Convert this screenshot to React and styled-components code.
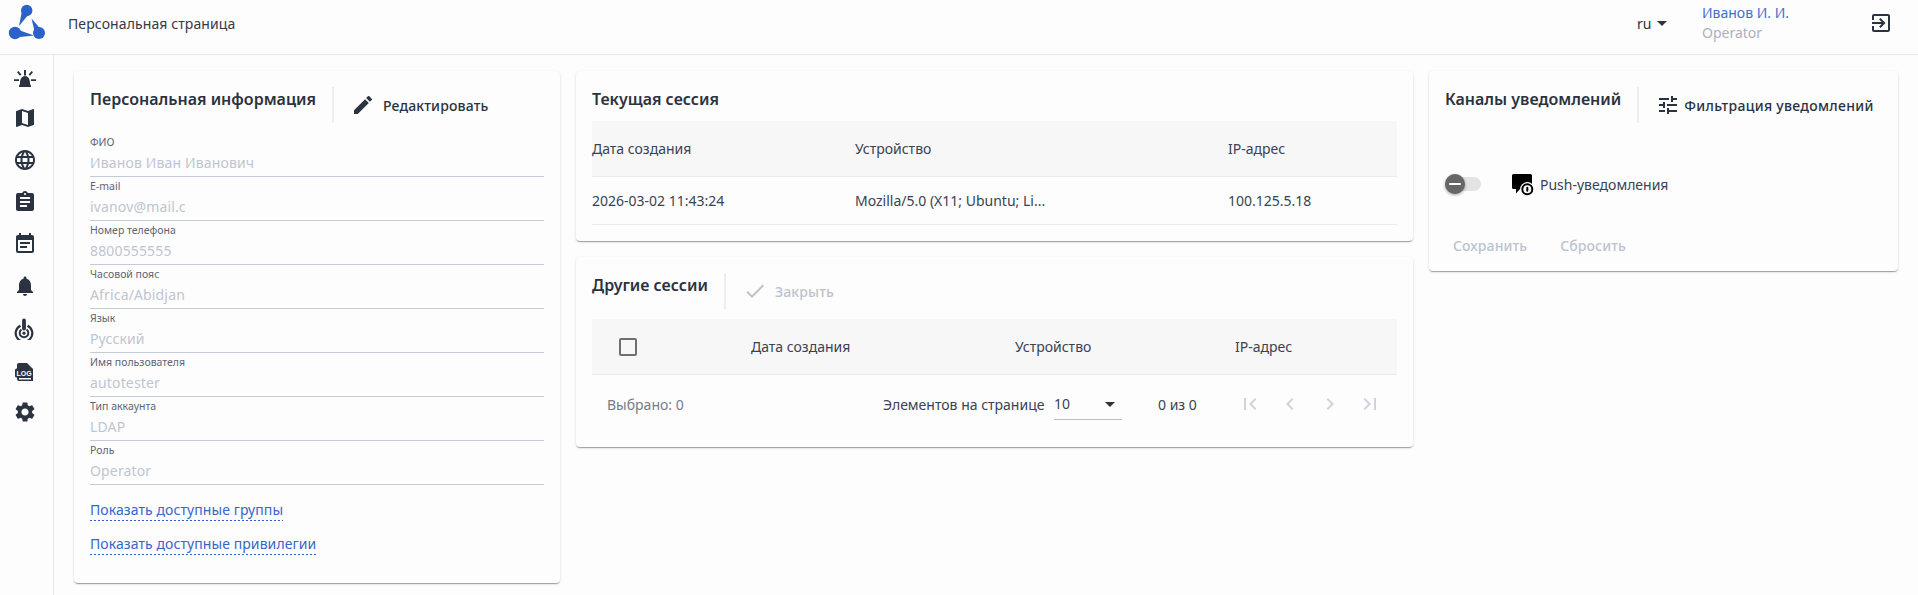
import React from "react";
import styled, { createGlobalStyle } from "styled-components";
import {
  MdMap,
  MdLanguage,
  MdAssignment,
  MdEventNote,
  MdNotifications,
  MdSettings,
  MdEdit,
  MdTune,
  MdCheck,
  MdExitToApp,
  MdFirstPage,
  MdLastPage,
  MdChevronLeft,
  MdChevronRight,
  MdArrowDropDown,
} from "react-icons/md";

const GlobalStyle = createGlobalStyle`
  html, body {
    margin: 0;
    padding: 0;
    background: #fdfdfd;
    font-family: "Noto Sans", "Open Sans", sans-serif;
    color: #2b3240;
  }
  * { box-sizing: border-box; }
`;

const fields = [
  ["ФИО", "Иванов Иван Иванович"],
  ["E-mail", "ivanov@mail.c"],
  ["Номер телефона", "8800555555"],
  ["Часовой пояс", "Africa/Abidjan"],
  ["Язык", "Русский"],
  ["Имя пользователя", "autotester"],
  ["Тип аккаунта", "LDAP"],
  ["Роль", "Operator"],
];

const Logo = () => (
  <svg width="40" height="40" viewBox="0 0 40 40">
    <g fill="#2a62c9">
      <path d="M23.200 9.400 L15.600 5 L12 23 Z" />
      <path d="M7.400 25.500 L8.600 34.500 L27 32.500 Z" />
      <path d="M35.600 28.200 L28.400 31.800 L24.500 15.500 Z" />
      <circle cx="19.700" cy="7.500" r="5.700" />
      <circle cx="8" cy="30" r="6.200" />
      <circle cx="32" cy="30" r="6" />
    </g>
  </svg>
);

const SirenIcon = () => (
  <svg width="24" height="24" viewBox="0 0 24 24" fill="#2b3240">
    <path d="M6 23v-1.500c.4-.4 1-.6 1-2.500 0-4 2-7 5-7s5 3 5 7c0 1.900.6 2.100 1 2.500V23z" />
    <path d="M11 6h2v5.500h-2zM4 8.300l1.400-1.300 3 3.400-1.400 1.300zM20 8.300l-1.400-1.300-3 3.400 1.400 1.300zM1 15.200h5v1.700H1zM18 15.200h5v1.700h-5z" />
  </svg>
);

const TargetIcon = () => (
  <svg width="24" height="24" viewBox="0 0 24 24" fill="none" stroke="#2b3240">
    <path d="M7.500 9.700a8.300 8.300 0 1 0 7 0" strokeWidth="2.200" />
    <path d="M8.500 13.500a4.300 4.300 0 1 0 5 0" strokeWidth="2" />
    <circle cx="11" cy="17.200" r="1.600" fill="#2b3240" stroke="none" />
    <path d="M11 4.500v8" strokeWidth="3.800" strokeLinecap="round" />
  </svg>
);

const LogIcon = () => (
  <svg width="24" height="24" viewBox="0 0 24 24">
    <path d="M6 5h8l6 6v12H6a2 2 0 0 1-2-2V7a2 2 0 0 1 2-2z" fill="#2b3240" />
    <path d="M6 20h12v1.500H6z" fill="#fdfdfd" />
    <rect x="2" y="10.500" width="18" height="9" rx="1.500" fill="#2b3240" />
    <LogText x="11" y="17.500">LOG</LogText>
  </svg>
);

const PushIcon = () => (
  <svg width="24" height="24" viewBox="0 0 24 24">
    <path d="M2.500 2h17A1.500 1.500 0 0 1 21 3.500V17H9l-4 4.500V17H2.500A1.500 1.500 0 0 1 1 15.500v-12A1.500 1.500 0 0 1 2.500 2z" fill="#000" />
    <circle cx="16.300" cy="17.300" r="7.200" fill="#fdfdfd" />
    <circle cx="16.300" cy="17.300" r="5" fill="none" stroke="#000" strokeWidth="2" />
    <rect x="15.300" y="14.800" width="2" height="5" rx="1" fill="#000" />
  </svg>
);

export default function App() {
  return (
    <Page>
      <GlobalStyle />
      <Header>
        <LogoBox><Logo /></LogoBox>
        <PageTitle>Персональная страница</PageTitle>
        <LangSelect>ru<MdArrowDropDown size={24} /></LangSelect>
        <UserBlock>
          <UserName>Иванов И. И.</UserName>
          <UserRole>Operator</UserRole>
        </UserBlock>
        <ExitButton><MdExitToApp size={24} /></ExitButton>
      </Header>
      <Body>
        <Sidebar>
          <SirenIcon />
          <MdMap size={24} />
          <MdLanguage size={24} />
          <MdAssignment size={24} />
          <MdEventNote size={24} />
          <MdNotifications size={24} />
          <TargetIcon />
          <LogIcon />
          <MdSettings size={24} />
        </Sidebar>
        <Content>
          <ProfileCard>
            <CardHead>
              <CardTitle>Персональная информация</CardTitle>
              <Divider />
              <HeadAction>
                <MdEdit size={24} />
                Редактировать
              </HeadAction>
            </CardHead>
            <FieldList>
              {fields.map(([label, value]) => (
                <Field key={label}>
                  <FieldLabel>{label}</FieldLabel>
                  <FieldValue>{value}</FieldValue>
                </Field>
              ))}
            </FieldList>
            <Links>
              <DottedLink>Показать доступные группы</DottedLink>
              <DottedLink>Показать доступные привилегии</DottedLink>
            </Links>
          </ProfileCard>
          <MiddleColumn>
            <SessionCard>
              <CardTitle>Текущая сессия</CardTitle>
              <CurrentHead>
                <span>Дата создания</span>
                <span>Устройство</span>
                <span>IP-адрес</span>
              </CurrentHead>
              <CurrentRow>
                <span>2026-03-02 11:43:24</span>
                <span>Mozilla/5.0 (X11; Ubuntu; Li...</span>
                <span>100.125.5.18</span>
              </CurrentRow>
            </SessionCard>
            <OtherCard>
              <CardHead>
                <CardTitle>Другие сессии</CardTitle>
                <Divider />
                <HeadAction disabled>
                  <MdCheck size={24} />
                  Закрыть
                </HeadAction>
              </CardHead>
              <OtherHead>
                <CheckBox />
                <span>Дата создания</span>
                <span>Устройство</span>
                <span>IP-адрес</span>
              </OtherHead>
              <Pager>
                <Selected>Выбрано: 0</Selected>
                <PerPage>Элементов на странице</PerPage>
                <PageSize>10<MdArrowDropDown size={24} /></PageSize>
                <PageCount>0 из 0</PageCount>
                <PagerIcons>
                  <MdFirstPage size={24} />
                  <MdChevronLeft size={24} />
                  <MdChevronRight size={24} />
                  <MdLastPage size={24} />
                </PagerIcons>
              </Pager>
            </OtherCard>
          </MiddleColumn>
          <ChannelCard>
            <CardHead>
              <CardTitle>Каналы уведомлений</CardTitle>
              <Divider />
              <HeadAction gap="4px" spacing="0.3px">
                <MdTune size={24} />
                Фильтрация уведомлений
              </HeadAction>
            </CardHead>
            <ChannelRow>
              <Toggle>
                <ToggleThumb />
              </Toggle>
              <PushIcon />
              <ChannelName>Push-уведомления</ChannelName>
            </ChannelRow>
            <Buttons>
              <GhostButton>Сохранить</GhostButton>
              <GhostButton>Сбросить</GhostButton>
            </Buttons>
          </ChannelCard>
        </Content>
      </Body>
    </Page>
  );
}

const LogText = styled.text`
  font-family: "Liberation Sans", sans-serif;
  font-size: 7px;
  font-weight: 700;
  fill: #fdfdfd;
  text-anchor: middle;
`;

const Page = styled.div`
  width: 1918px;
  height: 595px;
  overflow: hidden;
  background: #fdfdfd;
`;

const Header = styled.header`
  height: 55px;
  padding-bottom: 8px;
  display: flex;
  align-items: center;
  border-bottom: 1px solid #e9e9e9;
`;

const LogoBox = styled.div`
  width: 68px;
  padding-left: 7px;
  display: flex;
`;

const PageTitle = styled.div`
  font-size: 14px;
  letter-spacing: 0.1px;
  color: #33394a;
  flex: 1;
`;

const LangSelect = styled.div`
  display: flex;
  align-items: center;
  font-size: 14px;
  width: 65px;
  svg {
    margin-left: -1px;
    color: #2b3240;
  }
`;

const UserBlock = styled.div`
  width: 167px;
  font-size: 14px;
  line-height: 20px;
`;

const UserName = styled.div`
  color: #3f6fd1;
`;

const UserRole = styled.div`
  color: #aab2c0;
`;

const ExitButton = styled.div`
  width: 49px;
  display: flex;
  color: #2b3240;
`;

const Body = styled.div`
  display: flex;
  height: 540px;
`;

const Sidebar = styled.nav`
  width: 54px;
  border-right: 1px solid #e9e9e9;
  padding-top: 9px;
  padding-right: 4px;
  display: flex;
  flex-direction: column;
  align-items: center;
  gap: 18px;
  color: #2b3240;
  svg {
    flex: none;
  }
`;

const Content = styled.main`
  display: flex;
  align-items: flex-start;
  gap: 16px;
  padding: 16px 0 0 20px;
`;

const Card = styled.section`
  background: #fdfdfd;
  border-radius: 4px;
  box-shadow: 0 2px 1px -1px rgba(0, 0, 0, 0.2), 0 1px 1px 0 rgba(0, 0, 0, 0.14),
    0 1px 3px 0 rgba(0, 0, 0, 0.12);
`;

const ProfileCard = styled(Card)`
  width: 486px;
  height: 512px;
  padding: 16px;
`;

const MiddleColumn = styled.div`
  width: 837px;
  display: flex;
  flex-direction: column;
  gap: 16px;
`;

const SessionCard = styled(Card)`
  height: 170px;
  padding: 16px 16px 0;
`;

const OtherCard = styled(Card)`
  height: 190px;
  padding: 16px 16px 0;
`;

const ChannelCard = styled(Card)`
  width: 469px;
  height: 200px;
  padding: 16px;
`;

const CardHead = styled.div`
  display: flex;
  height: 36px;
`;

const CardTitle = styled.h2`
  margin: 0;
  font-size: 16px;
  font-weight: 600;
  line-height: 24px;
  color: #2b3240;
`;

const Divider = styled.div`
  width: 2px;
  height: 36px;
  background: #eceef3;
  margin-left: 16px;
`;

const HeadAction = styled.div`
  display: flex;
  align-items: center;
  gap: ${(p) => p.gap || "8px"};
  padding-left: 17px;
  font-size: 14px;
  font-weight: 500;
  letter-spacing: ${(p) => p.spacing || "0.15px"};
  color: ${(p) => (p.disabled ? "#bcc3d0" : "#2b3240")};
  svg {
    flex: none;
  }
`;

const FieldList = styled.div`
  margin-top: 10px;
`;

const Field = styled.div`
  height: 44px;
  border-bottom: 1px solid #c5cad6;
  padding-top: 2px;
`;

const FieldLabel = styled.div`
  font-size: 10.500px;
  line-height: 14px;
  color: #5d6472;
`;

const FieldValue = styled.div`
  margin-top: 2px;
  font-size: 14px;
  letter-spacing: 0.15px;
  line-height: 24px;
  color: #c0c5d0;
`;

const Links = styled.div`
  display: flex;
  flex-direction: column;
  align-items: flex-start;
  gap: 13px;
  margin-top: 15px;
`;

const DottedLink = styled.a`
  font-size: 14px;
  letter-spacing: 0.08px;
  line-height: 20px;
  color: #3766c9;
  padding-bottom: 1px;
  background: linear-gradient(90deg, #2a62c9 50%, transparent 50%) left bottom / 4px 1px repeat-x;
`;

const CurrentHead = styled.div`
  height: 56px;
  margin-top: 10px;
  background: #f7f7f7;
  border-bottom: 1px solid #ececec;
  display: grid;
  grid-template-columns: 263px 373px 1fr;
  align-items: center;
  font-size: 14px;
  color: #3b4252;
`;

const CurrentRow = styled(CurrentHead)`
  margin-top: 0;
  height: 48px;
  background: none;
  font-size: 14px;
`;

const OtherHead = styled.div`
  height: 56px;
  margin-top: 10px;
  background: #f7f7f7;
  border-bottom: 1px solid #ececec;
  display: grid;
  grid-template-columns: 132px 264px 220px 1fr;
  align-items: center;
  padding-left: 27px;
  font-size: 14px;
  color: #3b4252;
`;

const CheckBox = styled.div`
  width: 18px;
  height: 18px;
  border: 2px solid #6f6f6f;
  border-radius: 2px;
`;

const Pager = styled.div`
  display: flex;
  align-items: center;
  height: 58px;
  padding-left: 15px;
  font-size: 14px;
  color: #3b4252;
`;

const Selected = styled.span`
  color: #757c8a;
  width: 276px;
`;

const PerPage = styled.span`
  width: 171px;
`;

const PageSize = styled.div`
  width: 68px;
  height: 32px;
  display: flex;
  align-items: center;
  justify-content: space-between;
  border-bottom: 1px solid #b7bdcb;
  svg {
    color: #333;
  }
`;

const PageCount = styled.span`
  margin-left: 36px;
  width: 80px;
`;

const PagerIcons = styled.div`
  display: flex;
  gap: 16px;
  color: #ced3dc;
`;

const ChannelRow = styled.div`
  display: flex;
  align-items: center;
  height: 30px;
  margin-top: 46px;
  svg {
    margin-left: 30px;
  }
`;

const Toggle = styled.div`
  position: relative;
  width: 36px;
  height: 14px;
  border-radius: 7px;
  background: #e3e3e3;
`;

const ToggleThumb = styled.div`
  position: absolute;
  left: 0;
  top: -3px;
  width: 20px;
  height: 20px;
  border-radius: 50%;
  background: #666;
  box-shadow: 0 1px 3px rgba(0, 0, 0, 0.4);
  &::after {
    content: "";
    position: absolute;
    left: 4px;
    top: 9px;
    width: 12px;
    height: 2px;
    background: #fff;
    border-radius: 1px;
  }
`;

const ChannelName = styled.span`
  font-size: 14px;
  margin-left: 5px;
  color: #3b4252;
`;

const Buttons = styled.div`
  display: flex;
  gap: 33px;
  margin-top: 37px;
  padding-left: 8px;
`;

const GhostButton = styled.div`
  font-size: 14px;
  font-weight: 500;
  letter-spacing: 0.1px;
  color: #bcc3d0;
`;
